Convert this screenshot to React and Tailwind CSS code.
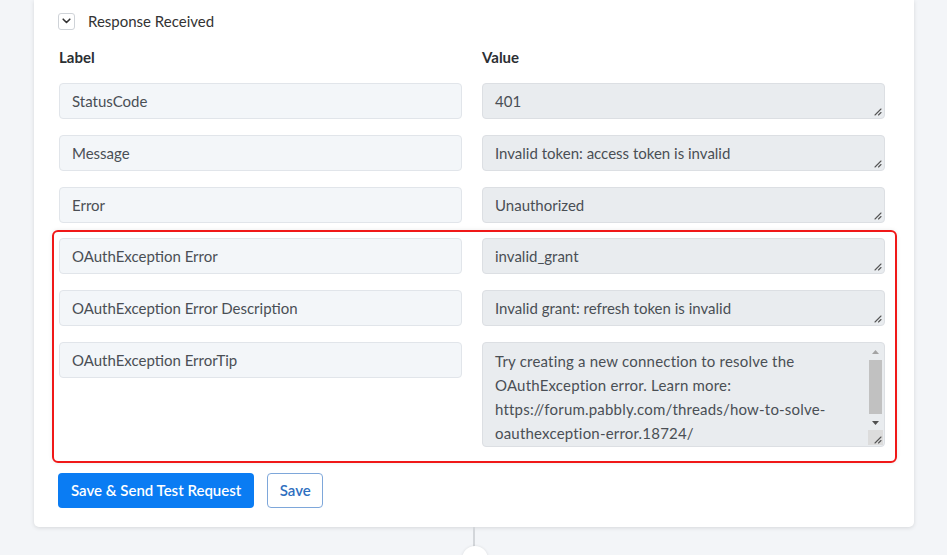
import React from "react";

const Grip = () => (
  <svg className="absolute right-[2px] bottom-[2px]" width="9" height="9" viewBox="0 0 9 9">
    <path d="M8 2 L2 8 M8 5.5 L5.5 8" stroke="#555" strokeWidth="1.1" strokeLinecap="round" />
  </svg>
);

const LabelBox = ({ children }) => (
  <div className="h-[36px] rounded-[4px] border border-[#e1e5ea] bg-[#f3f6f9] px-[12px] flex items-center text-[15px] text-[#4a4f55]">
    {children}
  </div>
);

const ValueBox = ({ children }) => (
  <div className="relative h-[36px] rounded-[4px] border border-[#dcdfe3] bg-[#e9ecef] px-[12px] flex items-center text-[15px] text-[#4a4f55]">
    {children}
    <Grip />
  </div>
);

export default function App() {
  const rows = [
    ["StatusCode", "401"],
    ["Message", "Invalid token: access token is invalid"],
    ["Error", "Unauthorized"],
  ];
  const boxed = [
    ["OAuthException Error", "invalid_grant"],
    ["OAuthException Error Description", "Invalid grant: refresh token is invalid"],
  ];
  return (
    <div
      className="w-[947px] h-[555px] overflow-hidden bg-[#f3f5f8] relative"
      style={{ fontFamily: "Lato, 'Noto Sans', sans-serif" }}
    >
      <div className="ml-[34px] w-[880px] bg-white rounded-b-[5px] shadow-[0_1px_4px_rgba(0,0,0,0.12)] pl-[24px] pr-[28px] pt-[12px] pb-[19px]">
        <div className="flex items-center h-[18px]">
          <div className="w-[17px] h-[17px] rounded-[3px] border border-[#cfd3d8] flex items-center justify-center">
            <svg width="9" height="6" viewBox="0 0 9 6">
              <path d="M1.2 1.2 L4.5 4.5 L7.8 1.2" stroke="#333" strokeWidth="1.6" fill="none" strokeLinecap="round" strokeLinejoin="round" />
            </svg>
          </div>
          <span className="ml-[13px] text-[15px] text-[#333]">Response Received</span>
        </div>
        <div className="grid grid-cols-[403px_403px] gap-x-[20px] mt-[17px] pl-[1px]">
          <div className="text-[15px] font-bold text-[#2b2f33] h-[20px] leading-[20px]">Label</div>
          <div className="text-[15px] font-bold text-[#2b2f33] h-[20px] leading-[20px]">Value</div>
        </div>
        <div className="flex flex-col gap-[16px] mt-[16px] pl-[1px]">
          {rows.map(([l, v]) => (
            <div key={l} className="grid grid-cols-[403px_403px] gap-x-[20px]">
              <LabelBox>{l}</LabelBox>
              <ValueBox>{v}</ValueBox>
            </div>
          ))}
        </div>
        <div className="mt-[7px] -ml-[6px] w-[845px] border-2 border-[#f01818] rounded-[6px] pt-[6px] pb-[14px] pl-[5px] shadow-[0_0_4px_rgba(0,0,0,0.08)]">
          <div className="flex flex-col gap-[16px]">
            {boxed.map(([l, v]) => (
              <div key={l} className="grid grid-cols-[403px_403px] gap-x-[20px]">
                <LabelBox>{l}</LabelBox>
                <ValueBox>{v}</ValueBox>
              </div>
            ))}
            <div className="grid grid-cols-[403px_403px] gap-x-[20px] items-start">
              <LabelBox>OAuthException ErrorTip</LabelBox>
              <div className="relative h-[105px] rounded-[4px] border border-[#dcdfe3] bg-[#e9ecef] pl-[12px] pr-[20px] pt-[6px] text-[15px] leading-[24px] text-[#4a4f55] overflow-hidden tracking-[0.2px]">
                <div>Try creating a new connection to resolve the</div>
                <div>OAuthException error. Learn more:</div>
                <div>https://forum.pabbly.com/threads/how-to-solve-</div>
                <div>oauthexception-error.18724/</div>
                <div className="absolute right-[1px] top-[1px] bottom-[16px] w-[15px] flex flex-col items-center">
                  <div className="h-[15px] flex items-center justify-center">
                    <svg width="7" height="4" viewBox="0 0 7 4"><path d="M0 4 L3.5 0 L7 4 Z" fill="#a3a3a3" /></svg>
                  </div>
                  <div className="w-[13px] h-[54px] bg-[#c1c1c1] mt-[1px]" />
                  <div className="flex-1" />
                  <div className="h-[15px] flex items-center justify-center">
                    <svg width="7" height="4" viewBox="0 0 7 4"><path d="M0 0 L3.5 4 L7 0 Z" fill="#505050" /></svg>
                  </div>
                </div>
                <div className="absolute right-[1px] bottom-[1px] w-[15px] h-[15px] bg-[#dcdcdc]" />
                <Grip />
              </div>
            </div>
          </div>
        </div>
        <div className="flex gap-[13px] mt-[10px]">
          <button className="h-[35px] px-[13px] rounded-[4px] bg-[#0a7cf3] text-white text-[15px] font-semibold">
            Save &amp; Send Test Request
          </button>
          <button className="h-[35px] w-[56px] rounded-[4px] border border-[#7ea7da] bg-white text-[#2f6fc0] text-[15px] font-semibold">
            Save
          </button>
        </div>
      </div>
      <div className="ml-[473px] w-[2px] h-[22px] bg-[#d3d6da]" />
      <div className="absolute left-[462px] top-[546px] w-[26px] h-[26px] rounded-full bg-white shadow-[0_0_3px_rgba(0,0,0,0.1)]" />
    </div>
  );
}
